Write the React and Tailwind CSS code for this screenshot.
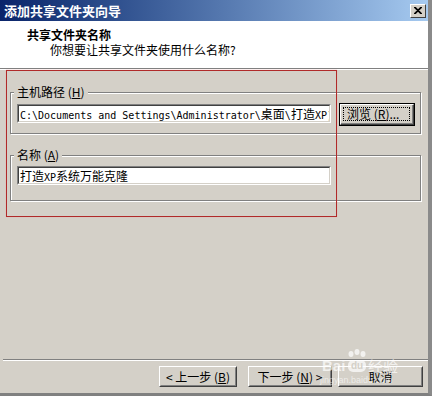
import React from 'react';

const cjk = "font-['Noto_Sans_CJK_SC',sans-serif]";
const mono = "font-['DejaVu_Sans_Mono','Noto_Sans_CJK_SC',monospace]";

// classic sunken text field
const Field = ({ children }) => (
    <div className="w-[314px] h-[19px] border border-t-[#808080] border-l-[#808080] border-b-white border-r-white">
        <div className="h-full border border-t-[#404040] border-l-[#404040] border-b-[#d4d0c8] border-r-[#d4d0c8] bg-white pl-[1px] overflow-hidden whitespace-nowrap text-black leading-[15px]">
            {children}
        </div>
    </div>
);

const Button = ({ className = '', children }) => (
    <div className={`h-[21px] border border-t-white border-l-white border-b-[#404040] border-r-[#404040] ${className}`}>
        <div className={`h-full border border-t-[#d4d0c8] border-l-[#d4d0c8] border-b-[#808080] border-r-[#808080] flex items-center justify-center text-[12px] text-black ${cjk}`}>
            {children}
        </div>
    </div>
);

const Group = ({ label, hotkey, className = '', children }) => (
    <div className={`relative w-[411px] border border-[#808080] shadow-[inset_1px_1px_0_#fff,1px_1px_0_#fff] ${className}`}>
        <span className={`absolute -top-[9px] left-[3px] px-[3px] bg-[#d4d0c8] text-[12px] leading-[16px] text-black ${cjk}`}>
            {label} (<u>{hotkey}</u>)
        </span>
        {children}
    </div>
);

const App = () => {
    return (
        <div className="relative w-[432px] h-[396px] bg-[#d4d0c8] border-r-[4px] border-r-[#8a8a8a] border-b-[3px] border-b-[#808080] flex flex-col overflow-hidden">
            {/* title bar */}
            <div className="h-[21px] bg-linear-to-r from-[#0a246a] to-[#a6caf0] flex items-center justify-between pl-[4px] pr-[2px]">
                <span className={`text-white font-bold text-[13px] ${cjk}`}>添加共享文件夹向导</span>
                <div className="w-[16px] h-[14px] bg-[#d4d0c8] border border-t-white border-l-white border-b-[#404040] border-r-[#404040] flex items-center justify-center">
                    <svg width="8" height="7" viewBox="0 0 8 7">
                        <path d="M0 0 L7 7 M1 0 L8 7 M7 0 L0 7 M8 0 L1 7" stroke="#000" strokeWidth="1.1" />
                    </svg>
                </div>
            </div>

            {/* header */}
            <div className={`h-[47px] bg-white pl-[27px] pt-[6px] text-black ${cjk}`}>
                <div className="text-[12px] font-bold leading-[16px]">共享文件夹名称</div>
                <div className="text-[12px] leading-[16px] pl-[23px] mt-[-1px]">你想要让共享文件夹使用什么名称?</div>
            </div>
            <div className="h-[2px] border-t border-t-[#808080] border-b border-b-white" />

            {/* body */}
            <div className="h-[289px] pl-[10px] pt-[22px]">
                <Group label="主机路径" hotkey="H" className="h-[42px]">
                    <div className="flex items-start pl-[6px] pt-[10px] gap-[8px]">
                        <div className="mt-[1px]">
                            <Field>
                                <span className={`${mono} text-[10px]`}>C:\Documents and Settings\Administrator\</span>
                                <span className={`${cjk} text-[12px]`}>桌面</span>
                                <span className={`${mono} text-[10px]`}>\</span>
                                <span className={`${cjk} text-[12px]`}>打造</span>
                                <span className={`${mono} text-[10px]`}>XP)</span>
                            </Field>
                        </div>
                        <div className="w-[76px] h-[23px] border border-black">
                            <div className="h-full border border-t-white border-l-white border-b-[#404040] border-r-[#404040]">
                                <div className="h-full p-[2px] border-b border-r border-[#808080]">
                                    <div className={`h-full border border-dotted border-black flex items-center pl-[3px] text-[12px] text-black ${cjk}`}>
                                        浏览 (<u>R</u>)...
                                    </div>
                                </div>
                            </div>
                        </div>
                    </div>
                </Group>

                <Group label="名称" hotkey="A" className="h-[46px] mt-[21px]">
                    <div className="pl-[6px] pt-[10px]">
                        <Field>
                            <span className={`${cjk} text-[12px]`}>打造</span>
                            <span className={`${mono} text-[10px]`}>XP</span>
                            <span className={`${cjk} text-[12px]`}>系统万能克隆</span>
                        </Field>
                    </div>
                </Group>
            </div>

            {/* footer */}
            <div className="h-[2px] ml-[3px] border-t border-t-[#808080] border-b border-b-white" />
            <div className="h-[32px] flex items-start pt-[5px] pl-[159px]">
                <Button className="w-[78px]">&lt; 上一步 (<u>B</u>)</Button>
                <Button className="w-[84px] ml-[11px]">下一步 (<u>N</u>) &gt;</Button>
                <Button className="w-[85px] ml-[6px]">取消</Button>
            </div>

            {/* red annotation box */}
            <div className="absolute left-[6px] top-[70px] w-[331px] h-[147px] border border-[#b02a2a] shadow-[0_0_1px_#f0a0a0] pointer-events-none" />

            {/* watermark */}
            <div className="absolute left-[318px] top-[349px] w-[90px] h-[38px] pointer-events-none text-white/70">
                <svg className="absolute left-[28px] top-[0px]" width="22" height="14" viewBox="0 0 22 14">
                    <ellipse cx="5" cy="5" rx="2.5" ry="3" fill="rgba(255,255,255,0.7)" />
                    <ellipse cx="11" cy="3" rx="2.5" ry="3" fill="rgba(255,255,255,0.7)" />
                    <ellipse cx="17" cy="5" rx="2.5" ry="3" fill="rgba(255,255,255,0.7)" />
                </svg>
                <span className="absolute left-[4px] top-[9px] font-['Liberation_Sans',sans-serif] font-bold text-[15px] leading-[16px]">Bai</span>
                <span className="absolute left-[30px] top-[11px] w-[18px] h-[12px] rounded-[5px] bg-white/70 text-[#d4d0c8] font-['Liberation_Sans',sans-serif] font-bold text-[10px] leading-[12px] text-center">du</span>
                <span className={`absolute left-[50px] top-[9px] text-[15px] leading-[16px] ${cjk}`}>经验</span>
                <span className="absolute left-[2px] top-[26px] text-[9px] leading-[10px] text-white/60 font-['Liberation_Sans',sans-serif]">jingyan.baidu.com</span>
            </div>
        </div>
    );
};

export default App;
